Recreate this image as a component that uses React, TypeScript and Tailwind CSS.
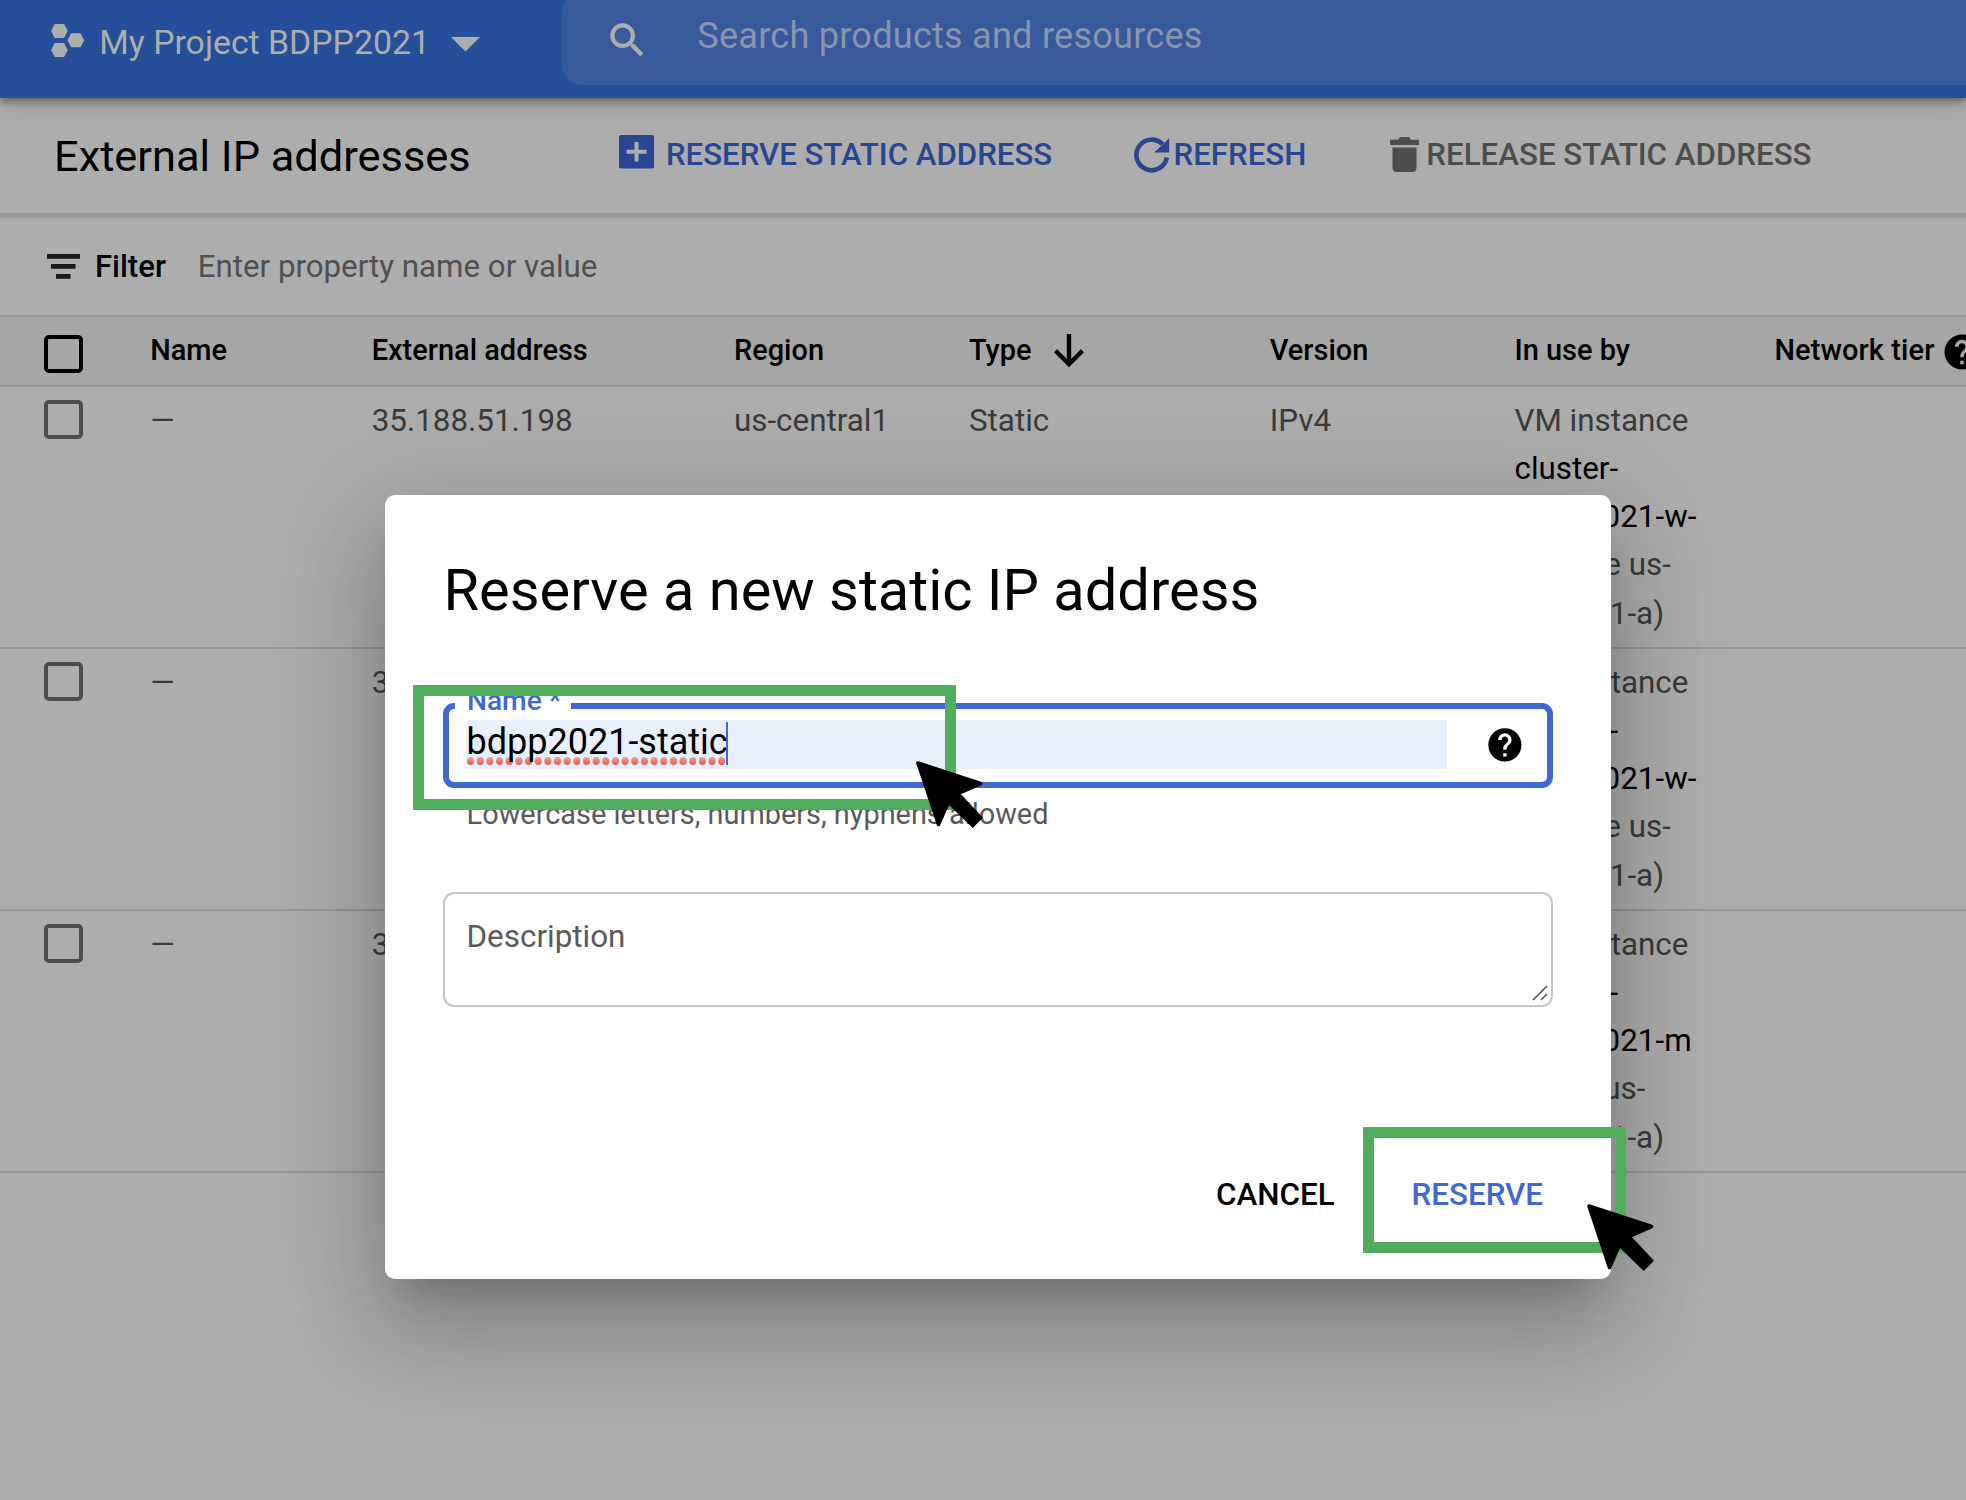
import React from 'react';

type Row = { address: string; region?: string; type?: string; version?: string; link: string[]; zone: string[] };

const rows: Row[] = [
  { address: '35.188.51.198', region: 'us-central1', type: 'Static', version: 'IPv4', link: ['cluster-', 'bdpp2021-w-'], zone: ['0 (Zone us-', 'central1-a)'] },
  { address: '35', link: ['cluster-', 'bdpp2021-w-'], zone: ['1 (Zone us-', 'central1-a)'] },
  { address: '35', link: ['cluster-', 'bdpp2021-m'], zone: ['(Zone us-', 'central1-a)'] },
];

const grid = 'grid grid-cols-[150.2px_221.5px_362.3px_235px_300.8px_244.7px_260px_191.5px]';

function HelpIcon({ className }: { className: string }) {
  return (
    <svg viewBox="0 0 24 24" className={className} fill="currentColor">
      <path d="M12 2C6.48 2 2 6.48 2 12s4.480 10 10 10 10-4.480 10-10S17.520 2 12 2zm1 17h-2v-2h2v2zm2.070-7.750l-.9.920C13.450 12.900 13 13.500 13 15h-2v-.5c0-1.100.450-2.100 1.170-2.830l1.240-1.260c.370-.360.590-.860.590-1.410 0-1.100-.9-2-2-2s-2 .9-2 2H8c0-2.210 1.790-4 4-4s4 1.790 4 4c0 .880-.360 1.680-.930 2.250z" stroke="#fff" strokeWidth="0" />
    </svg>
  );
}

function Pointer({ className }: { className: string }) {
  return (
    <svg viewBox="0 0 70 70" className={`absolute h-[70px] w-[70px] ${className}`}>
      <path d="M3 3L65.500 23.500L44 33L32.800 43.500L23.500 64.500Z" fill="#000" stroke="#000" strokeWidth="3.600" strokeLinejoin="round" />
      <path d="M30 30L42 30L68 57.700L57.700 68L30 41Z" fill="#000" />
    </svg>
  );
}

function Header() {
  return (
    <header className="relative z-10 flex h-[98px] items-start overflow-visible bg-[#254f99] shadow-[0_3px_8px_rgba(0,0,0,0.42),0_8px_22px_rgba(0,0,0,0.1)]">
      <svg viewBox="0 0 34 34" className="mt-[24px] ml-[51px] h-[34px] w-[34px]" fill="#adadad">
        <path d="M3.700 0h9.400l3.700 7-3.700 7H3.700L0 7zM20.100 9.200h9.400l3.700 7-3.700 7h-9.400l-3.700-7zM3.700 19h9.400l3.700 7-3.700 7H3.700L0 26z" />
      </svg>
      <div className="mt-[23px] ml-[14.300px] w-[351.900px] whitespace-nowrap text-[33.800px] leading-[40px] text-[#adadad]">My Project BDPP2021</div>
      <svg viewBox="0 0 29 15" className="mt-[37px] h-[15px] w-[29px]" fill="#adadad">
        <path d="M0 0h29L14.500 14.500z" />
      </svg>
      <div className="ml-[82px] flex h-[85px] flex-1 items-start overflow-hidden rounded-bl-[20px]">
        <div className="-mt-[7px] flex h-[92px] w-full items-start rounded-l-[20px] bg-[#385a9b]">
          <svg viewBox="0 0 24 24" className="mt-[25.400px] ml-[43px] h-[44.600px] w-[44.600px]" fill="#adadad" stroke="#adadad" strokeWidth="0.350">
            <path d="M15.500 14h-.790l-.280-.270C15.410 12.590 16 11.110 16 9.500 16 5.910 13.090 3 9.500 3S3 5.910 3 9.500 5.910 16 9.500 16c1.610 0 3.090-.590 4.230-1.570l.270.280v.790l5 4.990L20.490 19l-4.990-5zm-6 0C7.010 14 5 11.990 5 9.500S7.010 5 9.500 5 14 7.010 14 9.500 11.990 14 9.500 14z" />
          </svg>
          <div className="mt-[22px] ml-[47.500px] whitespace-nowrap text-[36.100px] leading-[42px] tracking-[0.240px] text-[#8694b0]">Search products and resources</div>
        </div>
      </div>
    </header>
  );
}

function Toolbar() {
  return (
    <div className="flex h-[120px] items-start border-b-[5px] border-[#989898] text-[31.270px] font-medium leading-[38px] whitespace-nowrap">
      <h1 className="mt-[33px] ml-[54px] w-[564.800px] text-[43.360px] leading-[52px] font-normal text-black">External IP addresses</h1>
      <svg viewBox="0 0 35 34" className="mt-[37.400px] h-[34px] w-[35px]">
        <rect width="35" height="33.500" rx="2" fill="#284691" />
        <path d="M7.500 16.700h20M17.500 6.900v19.600" stroke="#adadad" strokeWidth="4" />
      </svg>
      <span className="mt-[38.200px] ml-[12.200px] w-[468.200px] text-[31.200px] text-[#284691]">RESERVE STATIC ADDRESS</span>
      <svg viewBox="0 0 36 36" className="mt-[38.500px] h-[36px] w-[36px]">
        <path d="M32.800 20.500A15.300 15.300 0 1 1 28.600 7.200" fill="none" stroke="#284691" strokeWidth="4.600" />
        <path d="M35.200 1.200V15.600H20.200Z" fill="#284691" />
      </svg>
      <span className="mt-[38.200px] ml-[3.300px] w-[217.400px] text-[#284691]">REFRESH</span>
      <svg viewBox="0 0 29 36" className="mt-[39px] -ml-[0.500px] h-[36px] w-[29px]" fill="#4d4d4d">
        <path d="M0 2.800h8l2-2.800h9l2 2.800h8v5.200H0zM2.500 10.500h24v20q0 4.500-4.500 4.500H7q-4.500 0-4.500-4.500z" />
      </svg>
      <span className="mt-[38.200px] ml-[7px] text-[#4d4d4d]">RELEASE STATIC ADDRESS</span>
    </div>
  );
}

function FilterBar() {
  return (
    <div className="flex h-[99px] items-center border-b-[2px] border-[#989898] whitespace-nowrap">
      <svg viewBox="0 0 33 25" className="ml-[47px] h-[25px] w-[33px]" fill="#1a1a1a">
        <path d="M0 0h33v4.700H0zM4 10h24.500v4.800H4zM9 20h14.500v4.800H9z" />
      </svg>
      <span className="mt-[2px] ml-[14.900px] w-[102.800px] text-[31.100px] font-medium text-black">Filter</span>
      <span className="mt-[2px] text-[31.280px] text-[#505050]">Enter property name or value</span>
    </div>
  );
}

function Table() {
  return (
    <div>
      <div className={`${grid} h-[69.500px] border-b-2 border-[#969696] bg-[#a6a6a6] text-[28.940px] leading-[36px] font-medium whitespace-nowrap text-black *:mt-[15px]`}>
        <div>
          <div className="mt-[2.800px] ml-[44.200px] h-[38.600px] w-[38.600px] rounded-[5px] border-4 border-black" />
        </div>
        <div>Name</div>
        <div>External address</div>
        <div>Region</div>
        <div className="flex">
          Type
          <svg viewBox="0 0 30 34" className="mt-[1.500px] ml-[23px] h-[34px] w-[30px]" fill="none" stroke="#000" strokeWidth="4.400">
            <path d="M15 0V29M1.600 16.800L15 30.200L28.400 16.800" />
          </svg>
        </div>
        <div>Version</div>
        <div>In use by</div>
        <div className="flex">
          <span className="w-[167px] shrink-0 tracking-[0.100px]">Network tier</span>
          <HelpIcon className="-mt-[1.500px] h-[42px] w-[42px] shrink-0" />
        </div>
      </div>
      {rows.map((r, i) => (
        <div key={i} className={`${grid} h-[262px] border-b-2 border-[#969696] text-[31.370px] leading-[48.200px] whitespace-nowrap text-[#3b3b3b] *:pt-[10.300px]`}>
          <div>
            <div className="mt-[3.400px] ml-[44.200px] h-[38.600px] w-[38.600px] rounded-[5px] border-4 border-[#4d4d4d]" />
          </div>
          <div>—</div>
          <div>{r.address}</div>
          <div>{r.region}</div>
          <div>{r.type}</div>
          <div>{r.version}</div>
          <div>
            <div>VM instance</div>
            {r.link.map((l) => <div key={l} className="text-black">{l}</div>)}
            {r.zone.map((l) => <div key={l}>{l}</div>)}
          </div>
        </div>
      ))}
    </div>
  );
}

function Dialog() {
  return (
    <div className="absolute top-[495px] left-[385px] z-20 flex h-[784px] w-[1226px] flex-col rounded-[10px] bg-white px-[58px] text-black shadow-[0_26px_36px_-17px_rgba(0,0,0,0.2),0_58px_92px_7px_rgba(0,0,0,0.14),0_22px_111px_19px_rgba(0,0,0,0.12)]">
      <h2 className="mt-[61px] ml-[0.500px] text-[57.800px] leading-[68px] whitespace-nowrap">Reserve a new static IP address</h2>
      <div className="relative mt-[79px] flex h-[85px] items-start rounded-[11px] border-[6px] border-[#3f69d1] pl-[17px]">
        <div className="absolute -top-[6px] left-[6px] h-[7px] w-[116px] bg-white" />
        <div className="absolute -top-[26px] left-[17.900px] text-[28.200px] leading-[36px] font-medium whitespace-nowrap text-[#3f69d1]">Name *</div>
        <div className="mt-[11px] flex h-[48.500px] w-[981px] items-start bg-[#e8effd]">
          <div className="relative text-[36px] leading-[44px] whitespace-nowrap">
            <svg viewBox="0 0 262 8" className="absolute top-[37px] left-[1px] h-[8px] w-[262px]">
              <defs>
                <linearGradient id="dot" x1="0" y1="0" x2="0" y2="1">
                  <stop offset="0" stopColor="#eda399" />
                  <stop offset="1" stopColor="#e9584a" />
                </linearGradient>
              </defs>
              {Array.from({ length: 27 }, (_, i) => (
                <ellipse key={i} cx={3.600 + i * 9.660} cy="4" rx="3.600" ry="3.900" fill="url(#dot)" />
              ))}
            </svg>
            <span className="relative left-[0.500px]">bdpp2021-static</span>
            <span className="absolute top-[2px] left-[260px] h-[43px] w-[2px] bg-[#3f69d1]" />
          </div>
        </div>
        <HelpIcon className="mt-[15.500px] ml-[37.700px] h-[39.800px] w-[39.800px]" />
      </div>
      <div className="mt-[8px] pl-[23.600px] text-[28.900px] leading-[36px] whitespace-nowrap text-[#5a5a5a]">Lowercase letters, numbers, hyphens allowed</div>
      <div className="mt-[60px] flex h-[115px] items-start justify-between rounded-[11px] border-[2px] border-[#c6c6c6] pr-[3.500px] pl-[21.500px]">
        <span className="mt-[24px] text-[31.400px] leading-[38px] text-[#5a5a5a]">Description</span>
        <svg viewBox="0 0 16 16" className="mt-[91px] h-[16px] w-[16px]" fill="none" stroke="#555" strokeWidth="1.600">
          <path d="M1 15L15 1M9 15L15 9" />
        </svg>
      </div>
      <div className="mt-[169px] flex text-[31.370px] leading-[38px] font-medium">
        <span className="ml-[773px] w-[195.500px]">CANCEL</span>
        <span className="text-[#3f69d1]">RESERVE</span>
      </div>
    </div>
  );
}

export default function App() {
  return (
    <div className="relative h-[1500px] w-full overflow-hidden bg-[#adadad] font-['Roboto',sans-serif]">
      <Header />
      <Toolbar />
      <FilterBar />
      <Table />
      <Dialog />
      <div className="absolute top-[685px] left-[413px] z-30 h-[125px] w-[543px] border-[11px] border-[#50ad5b]" />
      <Pointer className="top-[760px] left-[915px] z-30" />
      <div className="absolute top-[1127px] left-[1363px] z-30 h-[126px] w-[263px] border-[11px] border-[#50ad5b]" />
      <Pointer className="top-[1203px] left-[1586px] z-30" />
    </div>
  );
}
